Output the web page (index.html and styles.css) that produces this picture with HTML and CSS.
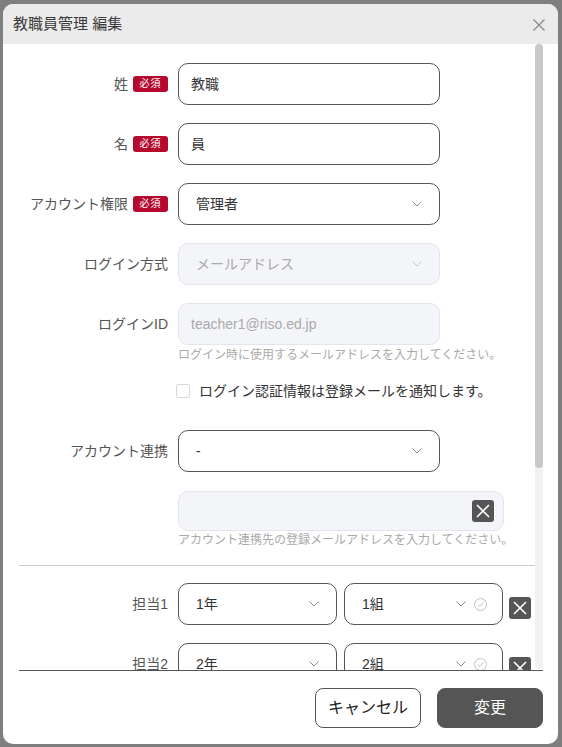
FILE: index.html
```html
<!DOCTYPE html>
<html lang="ja">
<head>
<meta charset="utf-8">
<link rel="stylesheet" href="styles.css">
</head>
<body>
<div class="dialog">
  <div class="header">
    <div class="title">教職員管理 編集</div>
    <svg class="close" width="12" height="12" viewBox="0 0 12 12"><path d="M0.5 0.5L11.5 11.5M11.5 0.5L0.5 11.5" stroke="#8a8a8a" stroke-width="1.3" fill="none"/></svg>
  </div>
  <div class="main">
    <div class="body">
      <div class="form">
        <div class="row">
          <div class="label"><span>姓</span><span class="req">必須</span></div>
          <div class="field"><div class="input">教職</div></div>
        </div>
        <div class="row">
          <div class="label"><span>名</span><span class="req">必須</span></div>
          <div class="field"><div class="input">員</div></div>
        </div>
        <div class="row">
          <div class="label"><span>アカウント権限</span><span class="req">必須</span></div>
          <div class="field"><div class="input select">管理者<svg class="chev" width="10" height="6" viewBox="0 0 10 6"><path d="M0.5 0.5L5 5L9.5 0.5" stroke="#8a8a8a" fill="none"/></svg></div></div>
        </div>
        <div class="row">
          <div class="label"><span>ログイン方式</span></div>
          <div class="field"><div class="input select disabled">メールアドレス<svg class="chev" width="10" height="6" viewBox="0 0 10 6"><path d="M0.5 0.5L5 5L9.5 0.5" stroke="#c4c4c4" fill="none"/></svg></div></div>
        </div>
        <div class="row">
          <div class="label"><span>ログインID</span></div>
          <div class="field"><div class="input disabled">teacher1@riso.ed.jp</div></div>
        </div>
        <div class="hint">ログイン時に使用するメールアドレスを入力してください。</div>
        <label class="check"><span class="box"></span><span>ログイン認証情報は登録メールを通知します。</span></label>
        <div class="row row-link">
          <div class="label"><span>アカウント連携</span></div>
          <div class="field"><div class="input select">-<svg class="chev" width="10" height="6" viewBox="0 0 10 6"><path d="M0.5 0.5L5 5L9.5 0.5" stroke="#8a8a8a" fill="none"/></svg></div></div>
        </div>
        <div class="wide">
          <div class="input disabled wide-input"><span class="xbtn"><svg width="14" height="14" viewBox="0 0 14 14"><path d="M1 1L13 13M13 1L1 13" stroke="#fff" stroke-width="1.6" fill="none"/></svg></span></div>
        </div>
        <div class="hint hint2">アカウント連携先の登録メールアドレスを入力してください。</div>
        <div class="divider"></div>

        <div class="row tan">
          <div class="label"><span>担当1</span></div>
          <div class="pair">
            <div class="input select half">1年<svg class="chev" width="10" height="6" viewBox="0 0 10 6"><path d="M0.5 0.5L5 5L9.5 0.5" stroke="#8a8a8a" fill="none"/></svg></div>
            <div class="input select half">1組<span class="icons"><svg width="10" height="6" viewBox="0 0 10 6"><path d="M0.5 0.5L5 5L9.5 0.5" stroke="#8a8a8a" fill="none"/></svg><svg width="13" height="13" viewBox="0 0 13 13"><circle cx="6.5" cy="6.5" r="6" stroke="#c0c0c0" fill="none"/><path d="M3.8 6.6L5.8 8.5L9.3 4.6" stroke="#c0c0c0" fill="none"/></svg></span></div>
            <span class="xbtn"><svg width="14" height="14" viewBox="0 0 14 14"><path d="M1 1L13 13M13 1L1 13" stroke="#fff" stroke-width="1.6" fill="none"/></svg></span>
          </div>
        </div>
        <div class="row tan">
          <div class="label"><span>担当2</span></div>
          <div class="pair">
            <div class="input select half">2年<svg class="chev" width="10" height="6" viewBox="0 0 10 6"><path d="M0.5 0.5L5 5L9.5 0.5" stroke="#8a8a8a" fill="none"/></svg></div>
            <div class="input select half">2組<span class="icons"><svg width="10" height="6" viewBox="0 0 10 6"><path d="M0.5 0.5L5 5L9.5 0.5" stroke="#8a8a8a" fill="none"/></svg><svg width="13" height="13" viewBox="0 0 13 13"><circle cx="6.5" cy="6.5" r="6" stroke="#c0c0c0" fill="none"/><path d="M3.8 6.6L5.8 8.5L9.3 4.6" stroke="#c0c0c0" fill="none"/></svg></span></div>
            <span class="xbtn"><svg width="14" height="14" viewBox="0 0 14 14"><path d="M1 1L13 13M13 1L1 13" stroke="#fff" stroke-width="1.6" fill="none"/></svg></span>
          </div>
        </div>
      </div>
    </div>
    <div class="scrollbar"><div class="thumb"></div></div>
  </div>
  <div class="footer">
    <button class="btn cancel">キャンセル</button>
    <button class="btn primary">変更</button>
  </div>
</div>
</body>
</html>
```

FILE: styles.css
```css
* { box-sizing: border-box; }
html, body { margin: 0; padding: 0; }
body {
  width: 562px;
  height: 747px;
  overflow: hidden;
  background: #7f7f7f;
  font-family: "Liberation Sans", "Noto Sans CJK JP", sans-serif;
  color: #333;
}
.dialog {
  margin: 4px 4px 3px 3px;
  width: 555px;
  height: 740px;
  background: #fff;
  border-radius: 10px;
  overflow: hidden;
  display: flex;
  flex-direction: column;
}
.header {
  height: 40px;
  flex: none;
  background: #ebebeb;
  display: flex;
  align-items: center;
  justify-content: space-between;
  padding: 0 13px 0 10px;
}
.title {
  font-size: 15px;
  line-height: 20px;
  color: #3a3a3a;
}
.close { display: block; margin-top: 1px; }
.main {
  flex: 1;
  min-height: 0;
  display: flex;
  margin: 0 15px 0 16px;
  border-bottom: 1px solid #555;
}
.body {
  flex: 1;
  min-width: 0;
  overflow: hidden;
}
.scrollbar {
  flex: none;
  width: 8px;
  margin-bottom: 1px;
  background: #f2f1f1;
  border-radius: 4px;
}
.thumb {
  height: 424px;
  background: #c8c8c8;
  border-radius: 4px;
}
.form {
  padding-top: 19px;
}
.row {
  display: grid;
  grid-template-columns: 149px 1fr;
  column-gap: 10px;
  align-items: center;
  margin-bottom: 18px;
}
.label {
  display: flex;
  justify-content: flex-end;
  align-items: center;
  gap: 5px;
  font-size: 14px;
  line-height: 20px;
  color: #555;
}
.req {
  display: inline-block;
  width: 35px;
  height: 16px;
  border-radius: 3px;
  background: #b50a2e;
  color: #fff;
  font-size: 10px;
  line-height: 16px;
  text-align: center;
  letter-spacing: 1px;
}
.field { display: flex; }
.input {
  width: 262px;
  height: 42px;
  border: 1px solid #555;
  border-radius: 10px;
  padding: 0 12px;
  display: flex;
  align-items: center;
  font-size: 14px;
  line-height: 20px;
  color: #333;
}
.select {
  padding-left: 17px;
  justify-content: space-between;
  padding-right: 17px;
}
.disabled {
  background: #f4f5f9;
  border-color: #e3e5ec;
  color: #aaa;
}
.chev { display: block; }
.hint {
  margin: -16px 0 0 159px;
  font-size: 12px;
  line-height: 16px;
  color: #aaa;
}
.check {
  display: flex;
  align-items: center;
  gap: 9px;
  margin: 18px 0 29px 157px;
  font-size: 14px;
  line-height: 20px;
  color: #333;
}
.box {
  width: 14px;
  height: 14px;
  border: 1px solid #d8d8d8;
  border-radius: 2px;
  background: #fff;
}
.row-link { margin-bottom: 19px; }
.wide { padding-left: 159px; }
.wide-input {
  width: 326px;
  height: 40px;
  justify-content: flex-end;
  padding-right: 9px;
}
.hint2 { margin-top: 1px; }
.divider {
  height: 1px;
  background: #ccc;
  margin: 17px 0 17px;
}
.xbtn {
  width: 22px;
  height: 22px;
  border-radius: 3px;
  background: #555;
  display: flex;
  align-items: center;
  justify-content: center;
  flex: none;
}
.xbtn svg { display: block; }
.pair {
  display: flex;
  align-items: center;
  gap: 7px;
}
.half {
  width: 159px;
}
.half + .half { padding-right: 15px; }
.half + .xbtn { margin-left: -1px; margin-top: 8px; }
.icons {
  display: flex;
  align-items: center;
  gap: 8px;
}
.icons svg { display: block; }
.footer {
  flex: none;
  display: flex;
  justify-content: flex-end;
  gap: 16px;
  padding: 17px 15px 16px 0;
}
.btn {
  width: 106px;
  height: 40px;
  border-radius: 8px;
  font-family: "Liberation Sans", "Noto Sans CJK JP", sans-serif;
  font-size: 16px;
  line-height: 20px;
  padding: 0;
}
.cancel {
  background: #fff;
  border: 1px solid #555;
  color: #222;
}
.primary {
  background: #555;
  border: 1px solid #555;
  color: #fff;
}
```
